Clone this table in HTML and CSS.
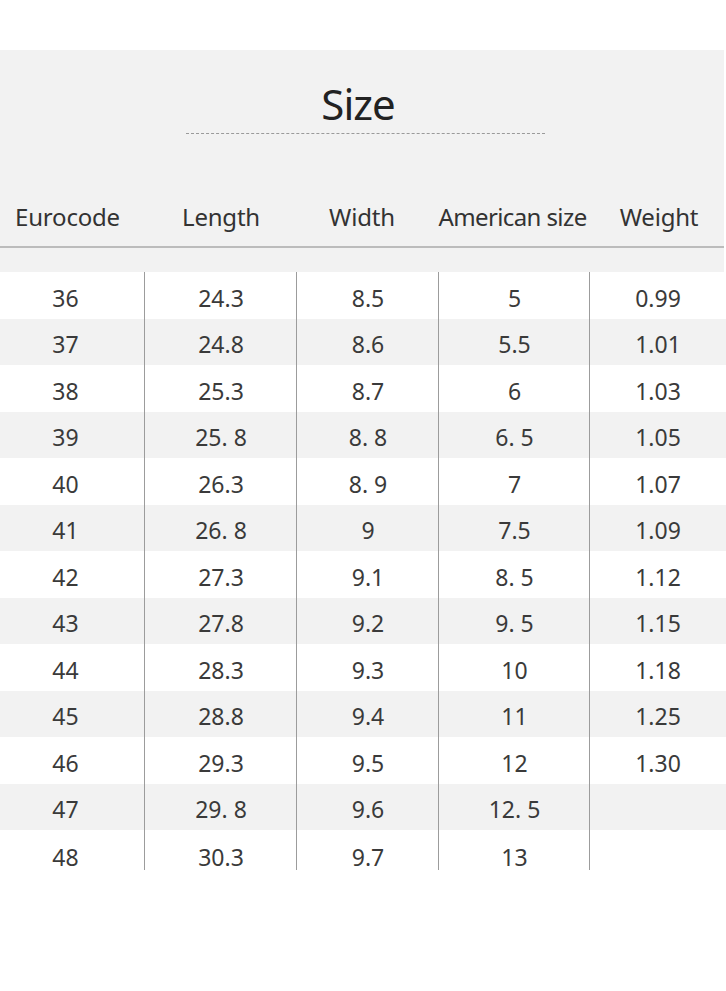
FILE: index.html
```html
<!DOCTYPE html>
<html>
<head>
<meta charset="utf-8">
<link rel="stylesheet" href="styles.css">
</head>
<body>
<div class="page">
  <div class="panel">
    <h1 class="title">Size</h1>
    <div class="rule"></div>
    <div class="row head">
      <div class="cell">Eurocode</div>
      <div class="cell">Length</div>
      <div class="cell">Width</div>
      <div class="cell">American size</div>
      <div class="cell">Weight</div>
    </div>
    <div class="head-line"></div>
  </div>
  <div class="body">
    <div class="row"><div class="cell">36</div><div class="cell">24.3</div><div class="cell">8.5</div><div class="cell">5</div><div class="cell">0.99</div></div>
    <div class="row alt"><div class="cell">37</div><div class="cell">24.8</div><div class="cell">8.6</div><div class="cell">5.5</div><div class="cell">1.01</div></div>
    <div class="row"><div class="cell">38</div><div class="cell">25.3</div><div class="cell">8.7</div><div class="cell">6</div><div class="cell">1.03</div></div>
    <div class="row alt"><div class="cell">39</div><div class="cell">25. 8</div><div class="cell">8. 8</div><div class="cell">6. 5</div><div class="cell">1.05</div></div>
    <div class="row"><div class="cell">40</div><div class="cell">26.3</div><div class="cell">8. 9</div><div class="cell">7</div><div class="cell">1.07</div></div>
    <div class="row alt"><div class="cell">41</div><div class="cell">26. 8</div><div class="cell">9</div><div class="cell">7.5</div><div class="cell">1.09</div></div>
    <div class="row"><div class="cell">42</div><div class="cell">27.3</div><div class="cell">9.1</div><div class="cell">8. 5</div><div class="cell">1.12</div></div>
    <div class="row alt"><div class="cell">43</div><div class="cell">27.8</div><div class="cell">9.2</div><div class="cell">9. 5</div><div class="cell">1.15</div></div>
    <div class="row"><div class="cell">44</div><div class="cell">28.3</div><div class="cell">9.3</div><div class="cell">10</div><div class="cell">1.18</div></div>
    <div class="row alt"><div class="cell">45</div><div class="cell">28.8</div><div class="cell">9.4</div><div class="cell">11</div><div class="cell">1.25</div></div>
    <div class="row"><div class="cell">46</div><div class="cell">29.3</div><div class="cell">9.5</div><div class="cell">12</div><div class="cell">1.30</div></div>
    <div class="row alt"><div class="cell">47</div><div class="cell">29. 8</div><div class="cell">9.6</div><div class="cell">12. 5</div><div class="cell"></div></div>
    <div class="row last"><div class="cell">48</div><div class="cell">30.3</div><div class="cell">9.7</div><div class="cell">13</div><div class="cell"></div></div>
  </div>
</div>
</body>
</html>
```
FILE: styles.css
```css
html, body {
  margin: 0;
  padding: 0;
  background: #ffffff;
}
.page {
  width: 726px;
  padding-top: 50px;
  font-family: "Noto Sans", "Open Sans", sans-serif;
  color: #333333;
}
.panel {
  background: #f2f2f2;
  width: 724px;
  padding-top: 28px;
  padding-bottom: 24px;
}
.title {
  margin: 0;
  text-align: center;
  font-weight: 400;
  font-size: 42px;
  line-height: 52px;
  color: #222222;
  letter-spacing: -1px;
  padding-right: 8px;
}
.rule {
  width: 359px;
  margin: 3px 0 0 186px;
  border-top: 1px dashed #9a9a9a;
}
.row {
  display: grid;
  grid-template-columns: 145px 152px 142px 151px 136px;
}
.head {
  margin-top: 54px;
  height: 58px;
  align-items: center;
}
.head .cell {
  font-size: 24px;
  line-height: 30px;
  text-align: center;
  color: #333333;
  letter-spacing: -0.2px;
  white-space: nowrap;
}
.head .cell:nth-child(1) {
  padding-right: 10px;
}
.head .cell:nth-child(3) {
  padding-right: 12px;
}
.head .cell:nth-child(4) {
  letter-spacing: -0.6px;
  margin: 0 -10px;
  padding-right: 4px;
}
.head .cell:nth-child(5) {
  padding-left: 2px;
}
.head-line {
  border-top: 2px solid #bcbcbc;
}
.body .row {
  height: 46.5px;
}
.body .row.alt {
  background: #f2f2f2;
}
.body .row.last {
  height: 40px;
}
.body .cell {
  height: 100%;
  box-sizing: border-box;
  padding-top: 5px;
  display: flex;
  align-items: center;
  justify-content: center;
  font-size: 23px;
  line-height: 28px;
  color: #3a3a3a;
}
.body .row.last .cell {
  align-items: flex-start;
  padding-top: 13px;
}
.body .cell + .cell {
  border-left: 1px solid #9c9c9c;
  margin-left: -1px;
}
.body .cell:first-child {
  padding-right: 14px;
}
```
